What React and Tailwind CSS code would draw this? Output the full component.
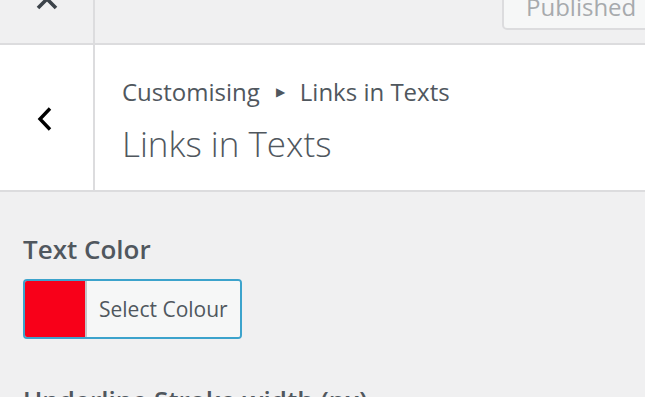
import React from "react";

export default function App() {
  return (
    <div
      className="w-[645px] h-[397px] overflow-hidden bg-[#f0f0f1] text-[#50575e]"
      style={{ fontFamily: '"Open Sans", "Noto Sans", sans-serif' }}
    >
      {/* top bar */}
      <div className="flex h-[45px] border-b-2 border-[#dcdcde]">
        <div className="w-[95px] shrink-0 border-r-2 border-[#dcdcde] flex justify-center">
          <svg width="24" height="24" viewBox="0 0 24 24" className="-mt-[13px] ml-[1px]">
            <path d="M3 3 L21 21 M21 3 L3 21" stroke="#3c434a" strokeWidth="3.6" fill="none" />
          </svg>
        </div>
        <div className="flex-1 flex justify-end">
          <div className="-mt-[16px] h-[46px] w-[150px] -mr-[7px] rounded-[5px] border-2 border-[#dcdcde] bg-[#f6f7f7] pl-[22px] flex items-center">
            <span className="text-[24px] text-[#a7aaad] leading-none">Published</span>
          </div>
        </div>
      </div>

      {/* header */}
      <div className="flex h-[147px] bg-white border-b-2 border-[#dcdcde]">
        <div className="w-[95px] shrink-0 border-r-2 border-[#dcdcde] flex items-center justify-center">
          <svg width="18" height="26" viewBox="0 0 18 26" className="-ml-[4px] mt-[2px]">
            <path d="M14 2.5 L4 13 L14 23.5" stroke="#000" strokeWidth="3.4" fill="none" />
          </svg>
        </div>
        <div className="flex-1 pl-[27px] pt-[33px]">
          <div className="flex items-center text-[24px] leading-[28px] text-[#50575e]">
            <span>Customising</span>
            <span className="ml-[16px] mr-[15px] text-[12px] leading-none">▶</span>
            <span>Links in Texts</span>
          </div>
          <div className="mt-[16px] text-[35px] font-light leading-[44px] text-[#50575e]">
            Links in Texts
          </div>
        </div>
      </div>

      {/* content */}
      <div className="px-[23px] pt-[41px]">
        <div className="text-[26px] font-semibold leading-[32px] text-[#50575e]">Text Color</div>
        <div className="mt-[14px] flex h-[60px] w-[219px] rounded-[4px] border-2 border-[#3ca3cc] overflow-hidden">
          <div className="w-[62px] bg-[#f80019] border-r-2 border-[#c3c4c7]" />
          <div className="flex-1 bg-[#f6f7f7] flex items-center pl-[12px] pt-[2px]">
            <span className="text-[21px] text-[#50575e]">Select Colour</span>
          </div>
        </div>
        <div className="mt-[45px] text-[26px] font-semibold leading-[32px] text-[#50575e]">
          Underline Stroke width (px)
        </div>
      </div>
    </div>
  );
}
